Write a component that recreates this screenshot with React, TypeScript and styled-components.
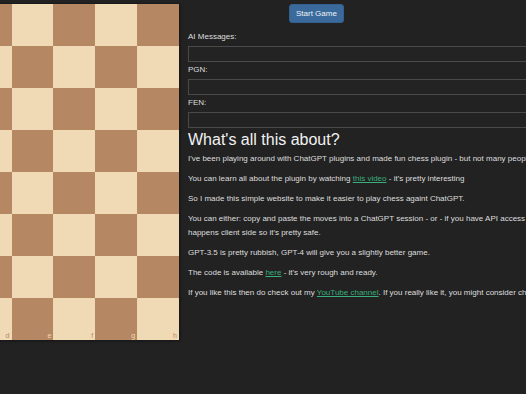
import React from 'react';
import styled, { createGlobalStyle } from 'styled-components';

const GlobalStyle = createGlobalStyle`
  html, body {
    margin: 0;
    padding: 0;
    background: #222222;
    overflow: hidden;
  }
  body {
    font-family: "Liberation Sans", Arial, sans-serif;
    color: #dedede;
  }
`;

const Page = styled.div`
  display: flex;
  align-items: flex-start;
  width: 526px;
  height: 394px;
  overflow: hidden;
`;

const Board = styled.div`
  flex: none;
  display: grid;
  grid-template-columns: repeat(8, 1fr);
  grid-template-rows: repeat(8, 1fr);
  width: 335px;
  height: 336px;
  margin: 4px 0 0 -156px;
  box-shadow: 0 0 0 1px #1a1a1a, 1px 1px 2px rgba(0, 0, 0, 0.6);
`;

const Square = styled.div<{ $dark: boolean }>`
  position: relative;
  background: ${(p) => (p.$dark ? '#b58863' : '#f0d9b5')};
`;

const Notation = styled.span<{ $dark: boolean }>`
  position: absolute;
  right: 2px;
  bottom: 1px;
  font-size: 7px;
  line-height: 7px;
  color: ${(p) => (p.$dark ? '#f0d9b5' : '#b58863')};
`;

const Panel = styled.div`
  flex: none;
  width: 620px;
  margin-left: 9px;
  padding-top: 4px;
`;

const ButtonRow = styled.div`
  display: flex;
  padding-left: 101px;
  margin-bottom: 9px;
`;

const Button = styled.button`
  height: 19px;
  padding: 0 6px;
  border: 1px solid #34608d;
  border-radius: 3px;
  background: #3a6a9b;
  color: #eef2f7;
  font-family: inherit;
  font-size: 8px;
  cursor: pointer;
`;

const Field = styled.div`
  display: flex;
  flex-direction: column;
  gap: 4px;
  margin-bottom: 3px;
`;

const Label = styled.label`
  font-size: 8px;
  line-height: 10px;
`;

const TextBox = styled.input`
  box-sizing: border-box;
  width: 100%;
  height: 16px;
  margin: 0;
  border: 1px solid #4a4a4a;
  background: #232323;
  color: #ddd;
  font-size: 8px;
  outline: none;
`;

const Heading = styled.h1`
  margin: 1px 0 3px;
  font-size: 16px;
  line-height: 18px;
  font-weight: normal;
  color: #f2f2f2;
`;

const Para = styled.p`
  margin: 0 0 6px;
  font-size: 8px;
  line-height: 14px;
  white-space: nowrap;
`;

const Link = styled.a`
  color: #3aae7c;
  text-decoration: underline;
`;

const files = ['a', 'b', 'c', 'd', 'e', 'f', 'g', 'h'];

export default function App() {
  const squares = [];
  for (let r = 0; r < 8; r++) {
    for (let f = 0; f < 8; f++) {
      const dark = (r + f) % 2 === 1;
      squares.push(
        <Square key={`${r}-${f}`} $dark={dark}>
          {r === 7 && f > 2 && <Notation $dark={dark}>{files[f]}</Notation>}
        </Square>
      );
    }
  }

  return (
    <>
      <GlobalStyle />
      <Page>
        <Board>{squares}</Board>
        <Panel>
          <ButtonRow>
            <Button>Start Game</Button>
          </ButtonRow>
          <Field>
            <Label>AI Messages:</Label>
            <TextBox />
          </Field>
          <Field>
            <Label>PGN:</Label>
            <TextBox />
          </Field>
          <Field>
            <Label>FEN:</Label>
            <TextBox />
          </Field>
          <Heading>What's all this about?</Heading>
          <Para>
            I've been playing around with ChatGPT plugins and made fun chess plugin - but not many people have access to plugins yet.
          </Para>
          <Para>
            You can learn all about the plugin by watching <Link href="#">this video</Link> - it's pretty interesting
          </Para>
          <Para>So I made this simple website to make it easier to play chess againt ChatGPT.</Para>
          <Para>
            You can either: copy and paste the moves into a ChatGPT session - or - if you have API access put your key in and play directly. Everything
            <br />
            happens client side so it's pretty safe.
          </Para>
          <Para>GPT-3.5 is pretty rubbish, GPT-4 will give you a slightly better game.</Para>
          <Para>
            The code is available <Link href="#">here</Link> - it's very rough and ready.
          </Para>
          <Para>
            If you like this then do check out my <Link href="#">YouTube channel</Link>. If you really like it, you might consider chipping in a coffee.
          </Para>
        </Panel>
      </Page>
    </>
  );
}
